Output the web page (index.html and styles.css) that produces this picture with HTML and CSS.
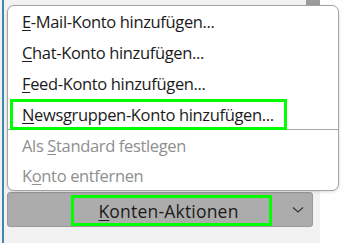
FILE: index.html
```html
<!DOCTYPE html>
<html>
<head>
<meta charset="utf-8">
<link rel="stylesheet" href="styles.css">
</head>
<body>
<div class="app">
  <div class="main">
    <div class="topbar"><div class="thumb"></div></div>
    <div class="spacer"></div>
    <div class="split-button">
      <span class="btn-label"><u>K</u>onten-Aktionen</span>
      <span class="btn-drop">
        <svg width="12" height="8" viewBox="0 0 12 8"><path d="M1 1.5 L6 6 L11 1.5" fill="none" stroke="#333" stroke-width="1.1"/></svg>
      </span>
    </div>
  </div>
  <div class="side"></div>
  <div class="menu">
    <div class="item"><span><u>E</u>-Mail-Konto hinzufügen...</span></div>
    <div class="item"><span><u>C</u>hat-Konto hinzufügen...</span></div>
    <div class="item"><span><u>F</u>eed-Konto hinzufügen...</span></div>
    <div class="item focus"><span><u>N</u>ewsgruppen-Konto hinzufügen...</span></div>
    <div class="sep"></div>
    <div class="item disabled small"><span>Als <u>S</u>tandard festlegen</span></div>
    <div class="item disabled small"><span>K<u>o</u>nto entfernen</span></div>
  </div>
</div>
</body>
</html>
```

FILE: styles.css
```css
html, body {
  margin: 0;
  padding: 0;
  background: #ffffff;
}
body {
  font-family: "Open Sans", "Noto Sans", sans-serif;
  width: 355px;
  height: 243px;
  overflow: hidden;
}
.app {
  position: relative;
  display: flex;
  height: 243px;
}
.main {
  width: 316px;
  margin-left: 2px;
  border-left: 2px solid #3d88b0;
  background: #f2f2f2;
  display: flex;
  flex-direction: column;
  box-shadow: -2px 0 0 #f2f2f2;
}
.side {
  flex: 1;
  background: #ffffff;
}
.topbar {
  height: 5px;
  display: flex;
  justify-content: flex-end;
}
.thumb {
  width: 14px;
  height: 5px;
  background: #9b9b9b;
}
.spacer {
  height: 187px;
}
.split-button {
  margin-left: 3px;
  width: 306px;
  height: 35px;
  box-sizing: border-box;
  background: #acacac;
  border: 1px solid #999999;
  border-radius: 3px;
  display: flex;
  align-items: flex-start;
  color: #1b1b1b;
  font-size: 17.5px;
  letter-spacing: 0.2px;
}
.btn-label {
  margin-left: 63px;
  margin-top: 2px;
  width: 201px;
  height: 31px;
  box-sizing: border-box;
  border: 3px solid #00ff00;
  display: flex;
  align-items: center;
  justify-content: center;
  padding-right: 6px;
}
.btn-drop {
  flex: 1;
  height: 33px;
  display: flex;
  align-items: center;
  justify-content: center;
  padding-left: 12px;
}
.btn-drop svg {
  display: block;
  margin-top: 1px;
}
u {
  text-decoration: underline;
  text-underline-offset: 2px;
  text-decoration-thickness: 1px;
}
.menu {
  position: absolute;
  left: 7px;
  top: 5px;
  width: 332px;
  height: 186px;
  box-sizing: border-box;
  background: #ffffff;
  border: 1px solid #a3a3a3;
  border-radius: 7px;
  box-shadow: 0 1px 3px rgba(0,0,0,0.15);
  padding-top: 0;
  color: #1b1b1b;
  font-size: 16.5px;
  letter-spacing: -0.35px;
}
.item {
  height: 31px;
  display: flex;
  align-items: center;
  padding-left: 14px;
  white-space: nowrap;
}
.item.small {
  height: 30px;
}
.item.focus {
  width: fit-content;
  box-sizing: border-box;
  margin-left: 2px;
  padding-left: 9px;
  padding-right: 10px;
  border: 3px solid #00ff00;
  position: relative;
  z-index: 1;
}
.sep {
  height: 1px;
  background: #a8a8a8;
  margin-top: -1px;
}
.disabled {
  color: #8f8f8f;
}
```
